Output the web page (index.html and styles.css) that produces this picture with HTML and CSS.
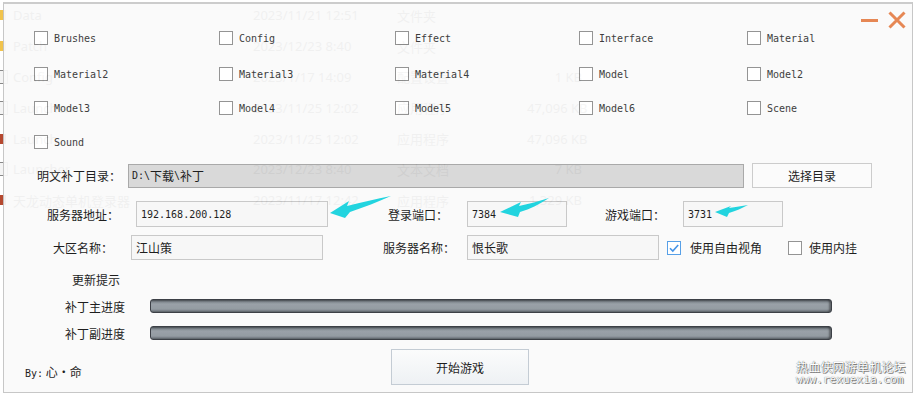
FILE: index.html
```html
<!DOCTYPE html>
<html lang="zh-CN">
<head>
    <meta charset="UTF-8">
    <title>补丁登录器</title>
    <link rel="stylesheet" href="styles.css">
</head>
<body>
<div class="desk">

    <!-- explorer window showing through the launcher -->
    <div class="ghost">
        <div class="ghost-row"><span class="gicon folder"></span><span>Data</span><span>2023/11/21 12:51</span><span>文件夹</span><span class="gsize"></span></div>
        <div class="ghost-row"><span class="gicon folder"></span><span>Patch</span><span>2023/12/23 8:40</span><span>文件夹</span><span class="gsize"></span></div>
        <div class="ghost-row"><span class="gicon doc"></span><span>Config</span><span>2023/1/17 14:09</span><span>配置设置</span><span class="gsize">1 KB</span></div>
        <div class="ghost-row"><span class="gicon doc"></span><span>Launcher</span><span>2023/11/25 12:02</span><span>应用程序</span><span class="gsize">47,096 KB</span></div>
        <div class="ghost-row"><span class="gicon app"></span><span>Launch</span><span>2023/11/25 12:02</span><span>应用程序</span><span class="gsize">47,096 KB</span></div>
        <div class="ghost-row"><span class="gicon doc"></span><span>Launcher</span><span>2023/12/23 8:40</span><span>文本文档</span><span class="gsize">7 KB</span></div>
        <div class="ghost-row"><span class="gicon app"></span><span>天龙动态单机登录器</span><span>2023/11/17 12:42</span><span>应用程序</span><span class="gsize">1,329 KB</span></div>
    </div>

    <div class="window">
        <div class="titlebar">
            <svg class="ctl" width="18" height="18" viewBox="0 0 18 18"><path d="M0 9.5H17" stroke="#e5804a" stroke-width="3"/></svg>
            <svg class="ctl" width="18" height="18" viewBox="0 0 18 18"><path d="M1.5 1.5L16.5 16.5M16.5 1.5L1.5 16.5" stroke="#e5804a" stroke-width="3"/></svg>
        </div>

        <div class="modules">
            <label class="mod"><span class="box"></span>Brushes</label>
            <label class="mod"><span class="box"></span>Config</label>
            <label class="mod"><span class="box"></span>Effect</label>
            <label class="mod"><span class="box"></span>Interface</label>
            <label class="mod"><span class="box"></span>Material</label>
            <label class="mod"><span class="box"></span>Material2</label>
            <label class="mod"><span class="box"></span>Material3</label>
            <label class="mod"><span class="box"></span>Material4</label>
            <label class="mod"><span class="box"></span>Model</label>
            <label class="mod"><span class="box"></span>Model2</label>
            <label class="mod"><span class="box"></span>Model3</label>
            <label class="mod"><span class="box"></span>Model4</label>
            <label class="mod"><span class="box"></span>Model5</label>
            <label class="mod"><span class="box"></span>Model6</label>
            <label class="mod"><span class="box"></span>Scene</label>
            <label class="mod"><span class="box"></span>Sound</label>
        </div>

        <div class="row row-path">
            <span class="lbl lbl-path">明文补丁目录：</span>
            <div class="field field-path"><span class="mono">D:\</span>下载<span class="mono">\</span>补丁</div>
            <div class="btn btn-dir">选择目录</div>
        </div>

        <div class="row row-server">
            <span class="lbl lbl-server">服务器地址：</span>
            <div class="field field-wide"><span class="mono">192.168.200.128</span></div>
            <span class="lbl lbl-login">登录端口：</span>
            <div class="field field-port"><span class="mono">7384</span></div>
            <span class="lbl lbl-game">游戏端口：</span>
            <div class="field field-port"><span class="mono">3731</span></div>
        </div>

        <div class="row row-area">
            <span class="lbl lbl-area">大区名称：</span>
            <div class="field field-wide">江山策</div>
            <span class="lbl lbl-name">服务器名称：</span>
            <div class="field field-wide">恨长歌</div>
            <span class="box checked"><svg width="12" height="12" viewBox="0 0 12 12"><path d="M2 6.2L4.8 9L10.2 3" fill="none" stroke="#3a8ee6" stroke-width="1.6"/></svg></span>
            <span class="opt">使用自由视角</span>
            <span class="box box-gap"></span>
            <span class="opt opt-last">使用内挂</span>
        </div>

        <div class="row row-hint">更新提示</div>

        <div class="row row-bar">
            <span class="lbl lbl-bar">补丁主进度</span>
            <div class="bar"></div>
        </div>
        <div class="row row-bar row-bar2">
            <span class="lbl lbl-bar">补丁副进度</span>
            <div class="bar"></div>
        </div>

        <div class="row row-bottom">
            <span class="author"><span class="mono">By:</span> 心·命</span>
            <div class="btn btn-start">开始游戏</div>
        </div>
    </div>

    <!-- cyan arrows drawn over the screenshot -->
    <svg class="marks" width="916" height="396" viewBox="0 0 916 396">
        <path d="M330 213 L349 201 L347 206 C362 202 376 199 391 196 C378 202 364 207 350 212 L345 218 Z" fill="#22d4df"/>
        <path d="M500 212 L521 202 L519 206 C529 204 539 201 549 198 C540 204 530 209 520 212 L518 217 Z" fill="#22d4df"/>
        <path d="M715 212 L731 206 L729 208 C736 207 742 206 748 205 C742 208 736 211 729 213 L727 217 Z" fill="#22d4df"/>
    </svg>

    <div class="watermark">
        <div class="wm-cn">热血侠网游单机论坛</div>
        <div class="wm-en">www.rexuexia.com</div>
    </div>
</div>
</body>
</html>
```

FILE: styles.css
```css
body {
    margin: 0;
    background-color: #ffffff;
    font-family: "Noto Sans CJK SC", sans-serif;
    font-size: 12px;
    color: #111;
}

.desk {
    position: relative;
    width: 916px;
    height: 396px;
    overflow: hidden;
}

/* explorer list behind the window */
.ghost {
    position: absolute;
    left: 0;
    top: 0;
    font-family: "Noto Sans", "Noto Sans CJK SC", sans-serif;
    font-size: 13px;
    color: #555;
}

.ghost-row {
    display: grid;
    grid-template-columns: 13px 240px 144px 130px 55px;
    align-items: center;
    height: 30.8px;
    white-space: nowrap;
}

.gsize {
    text-align: right;
}

.gicon {
    width: 12px;
    height: 10px;
    margin-left: -6px;
}

.gicon.folder { background-color: #f1c34b; }
.gicon.doc { border: 1px solid #888; background-color: #f4f4f4; height: 12px; }
.gicon.app { background-color: #b5482f; }

/* launcher window */
.window {
    position: relative;
    box-sizing: border-box;
    width: 910px;
    height: 391px;
    margin: 2px 0 0 3px;
    border: 1px solid #c4c4c4;
    border-top: 2px solid #c9c9c9;
    background-color: #fafafa;
    opacity: 0.94;
}

.titlebar {
    display: flex;
    justify-content: flex-end;
    gap: 9px;
    height: 27px;
    padding: 7px 6px 0 0;
    box-sizing: border-box;
}

.mono {
    font-family: "DejaVu Sans Mono", monospace;
    font-size: 10px;
}

.modules {
    display: grid;
    grid-template-columns: 185px 176px 184px 168px auto;
    grid-template-rows: 36px 34px 34px 14px;
    padding-left: 30px;
}

.mod {
    display: flex;
    align-items: center;
    gap: 6px;
    height: 14px;
    font-family: "DejaVu Sans Mono", monospace;
    font-size: 10px;
    color: #333;
}

.box {
    display: inline-flex;
    align-items: center;
    justify-content: center;
    box-sizing: border-box;
    width: 14px;
    height: 14px;
    border: 1px solid #8e8e8e;
    background-color: #fff;
    flex-shrink: 0;
}

.box.checked {
    border-color: #4d9be6;
    margin-left: 8px;
}

.row {
    display: flex;
    align-items: center;
}

.lbl {
    white-space: nowrap;
}

.field {
    box-sizing: border-box;
    display: flex;
    align-items: center;
    padding-left: 4px;
    border: 1px solid #c6c6c6;
    background-color: #f7f7f7;
    white-space: nowrap;
}

.btn {
    box-sizing: border-box;
    display: flex;
    align-items: center;
    justify-content: center;
    border: 1px solid #c9c9c9;
    background-color: #fbfbfb;
}

/* path row */
.row-path {
    height: 25px;
    margin-top: 14px;
}

.lbl-path { padding-left: 33px; width: 91px; }

.field-path {
    width: 616px;
    height: 24px;
    padding-left: 3px;
    border-color: #a4a4a4;
    background-color: #d7d7d7;
}

.btn-dir {
    width: 120px;
    height: 25px;
    margin-left: 8px;
}

/* server row */
.row-server {
    height: 26px;
    margin-top: 13px;
}

.row-server .field { height: 26px; }

.lbl-server { padding-left: 43px; width: 89px; }
.lbl-login { margin-left: 60px; width: 79px; }
.lbl-game { margin-left: 38px; width: 78px; }

.field-wide { width: 192px; }
.field-port { width: 100px; }

/* area row */
.row-area {
    height: 25px;
    margin-top: 8px;
}

.row-area .field { height: 25px; }

.lbl-area { padding-left: 49px; width: 78px; }
.lbl-name { margin-left: 60px; width: 84px; }

.opt { margin-left: 9px; }
.box-gap { margin-left: 26px; }
.opt-last { margin-left: 7px; }

/* progress */
.row-hint {
    height: 18px;
    margin-top: 10px;
    padding-left: 68px;
}

.row-bar {
    height: 14px;
    margin-top: 11px;
}

.row-bar2 { margin-top: 13px; }

.lbl-bar { padding-left: 61px; width: 85px; }

.bar {
    box-sizing: border-box;
    width: 682px;
    height: 14px;
    border-radius: 3px;
    border: 1px solid #30353b;
    background: linear-gradient(#454b52 0, #7a8289 2px, #949ca3 4px, #8e969d 9px, #5e666d 12px);
    box-shadow: inset -2px 0 2px rgba(0, 0, 0, 0.4);
}

/* bottom */
.row-bottom {
    height: 36px;
    margin-top: 9px;
}

.author {
    align-self: flex-end;
    width: 366px;
    margin-bottom: 2px;
    padding-left: 21px;
    line-height: 18px;
}

.btn-start {
    width: 138px;
    height: 36px;
    border-color: #c1c9d2;
    background: linear-gradient(#fbfcfc, #eef1f4);
}

/* overlays */
.marks {
    position: absolute;
    left: 0;
    top: 0;
    pointer-events: none;
}

.watermark {
    position: absolute;
    left: 796px;
    top: 359px;
    color: #fff;
    text-shadow: 0 0 1px #444, 1px 1px 0 #8a8a8a;
}

.wm-cn {
    font-size: 12px;
    line-height: 16px;
    letter-spacing: 0.2px;
}

.wm-en {
    font-family: "DejaVu Sans Mono", monospace;
    font-size: 11px;
    line-height: 10px;
    letter-spacing: 0.1px;
}
```
